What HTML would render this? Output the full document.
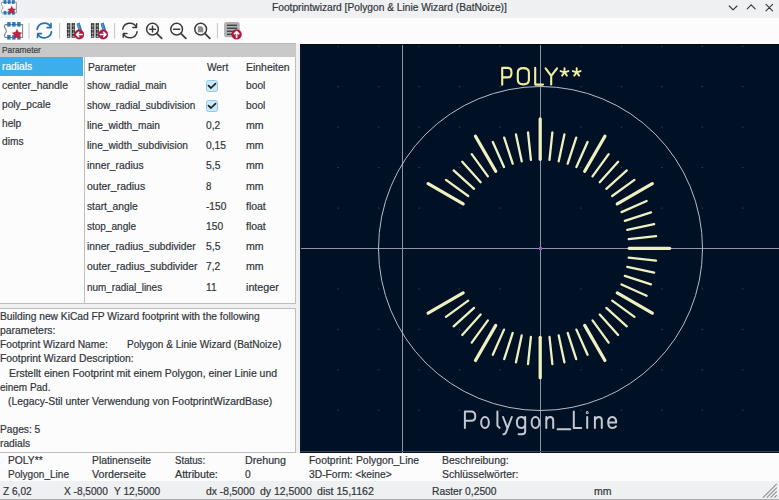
<!DOCTYPE html><html><head><meta charset="utf-8"><style>*{margin:0;padding:0;box-sizing:border-box}
html,body{width:779px;height:500px;overflow:hidden;background:#eff0f1;font-family:"Liberation Sans",sans-serif;font-size:10.2px;color:#31363b}
.a{position:absolute;white-space:pre;line-height:1;-webkit-text-stroke:0.2px currentColor}
svg{position:absolute;overflow:visible}
</style></head><body><div style="position:absolute;left:0px;top:0px;width:779px;height:18px;background:#eff0f1;"></div>
<div class="a" style="left:271.70px;top:2.90px;transform:scaleX(1.0017);transform-origin:0 0">Footprintwizard [Polygon &amp; Linie Wizard (BatNoize)]</div>
<div style="position:absolute;left:0px;top:18px;width:779px;height:26px;background:#fcfcfc;"></div>
<div style="position:absolute;left:0px;top:43px;width:296px;height:1px;background:#b9b9b9;"></div>
<div style="position:absolute;left:0px;top:44px;width:296px;height:13px;background:#c9c9c9;"></div>
<div class="a" style="left:1.90px;top:45.85px;transform:scaleX(0.9688);transform-origin:0 0;color:#3b3f44;font-size:8.6px">Parameter</div>
<div style="position:absolute;left:0px;top:57px;width:84px;height:247px;background:#fcfcfc;"></div>
<div style="position:absolute;left:0px;top:57px;width:83px;height:19px;background:#3daee9;"></div>
<div class="a" style="left:2.00px;top:62.30px;color:#fcfcfc">radials</div>
<div class="a" style="left:2.00px;top:81.05px;transform:scaleX(1.0209);transform-origin:0 0">center_handle</div>
<div class="a" style="left:2.00px;top:99.80px">poly_pcale</div>
<div class="a" style="left:2.00px;top:118.55px">help</div>
<div class="a" style="left:2.00px;top:137.30px">dims</div>
<div style="position:absolute;left:84px;top:57px;width:212px;height:247px;background:#fcfcfc;border-left:1px solid #bdbdbd;border-right:1px solid #bdbdbd;border-bottom:1px solid #bdbdbd"></div>
<div class="a" style="left:87.70px;top:62.70px;transform:scaleX(1.0100);transform-origin:0 0">Parameter</div>
<div class="a" style="left:206.90px;top:62.70px">Wert</div>
<div class="a" style="left:246.40px;top:62.70px;transform:scaleX(1.0251);transform-origin:0 0">Einheiten</div>
<div class="a" style="left:86.90px;top:80.60px;transform:scaleX(0.9694);transform-origin:0 0">show_radial_main</div>
<div style="position:absolute;left:206px;top:79.80px;width:12px;height:12px;border:1px solid #8ccbeb;border-radius:2.5px;background:#cbe8f7"></div>
<svg style="left:206px;top:79.80px" width="12" height="12"><path d="M2.5 5.7 L5 8 L9.5 3.7" fill="none" stroke="#1f2326" stroke-width="1.7" stroke-linecap="round" stroke-linejoin="round"/></svg>
<div class="a" style="left:246.10px;top:80.60px">bool</div>
<div class="a" style="left:86.90px;top:100.80px;transform:scaleX(0.9804);transform-origin:0 0">show_radial_subdivision</div>
<div style="position:absolute;left:206px;top:100.00px;width:12px;height:12px;border:1px solid #8ccbeb;border-radius:2.5px;background:#cbe8f7"></div>
<svg style="left:206px;top:100.00px" width="12" height="12"><path d="M2.5 5.7 L5 8 L9.5 3.7" fill="none" stroke="#1f2326" stroke-width="1.7" stroke-linecap="round" stroke-linejoin="round"/></svg>
<div class="a" style="left:246.10px;top:100.80px">bool</div>
<div class="a" style="left:86.90px;top:121.00px;transform:scaleX(0.9994);transform-origin:0 0">line_width_main</div>
<div class="a" style="left:206.10px;top:121.00px">0,2</div>
<div class="a" style="left:246.10px;top:121.00px;transform:scaleX(1.0357);transform-origin:0 0">mm</div>
<div class="a" style="left:86.90px;top:141.20px;transform:scaleX(0.9961);transform-origin:0 0">line_width_subdivision</div>
<div class="a" style="left:206.10px;top:141.20px;transform:scaleX(0.9975);transform-origin:0 0">0,15</div>
<div class="a" style="left:246.10px;top:141.20px;transform:scaleX(1.0357);transform-origin:0 0">mm</div>
<div class="a" style="left:86.90px;top:161.40px;transform:scaleX(1.0084);transform-origin:0 0">inner_radius</div>
<div class="a" style="left:206.10px;top:161.40px;transform:scaleX(1.0157);transform-origin:0 0">5,5</div>
<div class="a" style="left:246.10px;top:161.40px;transform:scaleX(1.0357);transform-origin:0 0">mm</div>
<div class="a" style="left:86.90px;top:181.60px;transform:scaleX(1.0264);transform-origin:0 0">outer_radius</div>
<div class="a" style="left:206.10px;top:181.60px;transform:scaleX(0.9522);transform-origin:0 0">8</div>
<div class="a" style="left:246.10px;top:181.60px;transform:scaleX(1.0357);transform-origin:0 0">mm</div>
<div class="a" style="left:86.90px;top:201.80px;transform:scaleX(1.0046);transform-origin:0 0">start_angle</div>
<div class="a" style="left:206.10px;top:201.80px;transform:scaleX(0.9946);transform-origin:0 0">-150</div>
<div class="a" style="left:246.10px;top:201.80px;transform:scaleX(1.0271);transform-origin:0 0">float</div>
<div class="a" style="left:86.90px;top:222.00px;transform:scaleX(0.9838);transform-origin:0 0">stop_angle</div>
<div class="a" style="left:206.10px;top:222.00px">150</div>
<div class="a" style="left:246.10px;top:222.00px;transform:scaleX(1.0271);transform-origin:0 0">float</div>
<div class="a" style="left:86.90px;top:242.20px;transform:scaleX(1.0046);transform-origin:0 0">inner_radius_subdivider</div>
<div class="a" style="left:206.10px;top:242.20px;transform:scaleX(1.0157);transform-origin:0 0">5,5</div>
<div class="a" style="left:246.10px;top:242.20px;transform:scaleX(1.0357);transform-origin:0 0">mm</div>
<div class="a" style="left:86.90px;top:262.40px;transform:scaleX(1.0169);transform-origin:0 0">outer_radius_subdivider</div>
<div class="a" style="left:206.10px;top:262.40px">7,2</div>
<div class="a" style="left:246.10px;top:262.40px;transform:scaleX(1.0357);transform-origin:0 0">mm</div>
<div class="a" style="left:86.90px;top:282.60px;transform:scaleX(0.9752);transform-origin:0 0">num_radial_lines</div>
<div class="a" style="left:206.10px;top:282.60px">11</div>
<div class="a" style="left:246.10px;top:282.60px;transform:scaleX(1.0500);transform-origin:0 0">integer</div>
<div style="position:absolute;left:0px;top:303px;width:296px;height:1px;background:#bdbdbd;"></div>
<div style="position:absolute;left:0px;top:304px;width:296px;height:4px;background:#eff0f1;"></div>
<div style="position:absolute;left:0px;top:308px;width:296px;height:145px;background:#fcfcfc;border-top:1px solid #bdbdbd;border-right:1px solid #bdbdbd;border-bottom:1px solid #bdbdbd"></div>
<div class="a" style="left:0.00px;top:312.00px;transform:scaleX(1.0042);transform-origin:0 0">Building new KiCad FP Wizard footprint with the following</div>
<div class="a" style="left:0.00px;top:326.15px;transform:scaleX(1.0199);transform-origin:0 0">parameters:</div>
<div class="a" style="left:0.00px;top:340.30px;transform:scaleX(1.0018);transform-origin:0 0">Footprint Wizard Name:</div>
<div class="a" style="left:0.00px;top:354.45px;transform:scaleX(1.0182);transform-origin:0 0">Footprint Wizard Description:</div>
<div class="a" style="left:8.60px;top:368.60px;transform:scaleX(1.0269);transform-origin:0 0">Erstellt einen Footprint mit einem Polygon, einer Linie und</div>
<div class="a" style="left:0.00px;top:382.75px;transform:scaleX(0.9786);transform-origin:0 0">einem Pad.</div>
<div class="a" style="left:8.10px;top:396.90px;transform:scaleX(1.0164);transform-origin:0 0">(Legacy-Stil unter Verwendung von FootprintWizardBase)</div>
<div class="a" style="left:0.00px;top:425.20px">Pages: 5</div>
<div class="a" style="left:0.00px;top:439.35px">radials</div>
<div class="a" style="left:127.20px;top:340.30px;transform:scaleX(0.9874);transform-origin:0 0">Polygon &amp; Linie Wizard (BatNoize)</div>
<svg style="left:300px;top:44px" width="479" height="409"><rect x="0" y="0" width="479" height="409" fill="#001126"/><rect x="37.75" y="1.75" width="1" height="1" fill="#4a5566"/><rect x="37.75" y="42.20" width="1" height="1" fill="#4a5566"/><rect x="37.75" y="82.65" width="1" height="1" fill="#4a5566"/><rect x="37.75" y="123.10" width="1" height="1" fill="#4a5566"/><rect x="37.75" y="163.55" width="1" height="1" fill="#4a5566"/><rect x="37.75" y="204.00" width="1" height="1" fill="#4a5566"/><rect x="37.75" y="244.45" width="1" height="1" fill="#4a5566"/><rect x="37.75" y="284.90" width="1" height="1" fill="#4a5566"/><rect x="37.75" y="325.35" width="1" height="1" fill="#4a5566"/><rect x="37.75" y="365.80" width="1" height="1" fill="#4a5566"/><rect x="78.20" y="1.75" width="1" height="1" fill="#4a5566"/><rect x="78.20" y="42.20" width="1" height="1" fill="#4a5566"/><rect x="78.20" y="82.65" width="1" height="1" fill="#4a5566"/><rect x="78.20" y="123.10" width="1" height="1" fill="#4a5566"/><rect x="78.20" y="163.55" width="1" height="1" fill="#4a5566"/><rect x="78.20" y="204.00" width="1" height="1" fill="#4a5566"/><rect x="78.20" y="244.45" width="1" height="1" fill="#4a5566"/><rect x="78.20" y="284.90" width="1" height="1" fill="#4a5566"/><rect x="78.20" y="325.35" width="1" height="1" fill="#4a5566"/><rect x="78.20" y="365.80" width="1" height="1" fill="#4a5566"/><rect x="118.65" y="1.75" width="1" height="1" fill="#4a5566"/><rect x="118.65" y="42.20" width="1" height="1" fill="#4a5566"/><rect x="118.65" y="82.65" width="1" height="1" fill="#4a5566"/><rect x="118.65" y="123.10" width="1" height="1" fill="#4a5566"/><rect x="118.65" y="163.55" width="1" height="1" fill="#4a5566"/><rect x="118.65" y="204.00" width="1" height="1" fill="#4a5566"/><rect x="118.65" y="244.45" width="1" height="1" fill="#4a5566"/><rect x="118.65" y="284.90" width="1" height="1" fill="#4a5566"/><rect x="118.65" y="325.35" width="1" height="1" fill="#4a5566"/><rect x="118.65" y="365.80" width="1" height="1" fill="#4a5566"/><rect x="159.10" y="1.75" width="1" height="1" fill="#4a5566"/><rect x="159.10" y="42.20" width="1" height="1" fill="#4a5566"/><rect x="159.10" y="82.65" width="1" height="1" fill="#4a5566"/><rect x="159.10" y="123.10" width="1" height="1" fill="#4a5566"/><rect x="159.10" y="163.55" width="1" height="1" fill="#4a5566"/><rect x="159.10" y="204.00" width="1" height="1" fill="#4a5566"/><rect x="159.10" y="244.45" width="1" height="1" fill="#4a5566"/><rect x="159.10" y="284.90" width="1" height="1" fill="#4a5566"/><rect x="159.10" y="325.35" width="1" height="1" fill="#4a5566"/><rect x="159.10" y="365.80" width="1" height="1" fill="#4a5566"/><rect x="199.55" y="1.75" width="1" height="1" fill="#4a5566"/><rect x="199.55" y="42.20" width="1" height="1" fill="#4a5566"/><rect x="199.55" y="82.65" width="1" height="1" fill="#4a5566"/><rect x="199.55" y="123.10" width="1" height="1" fill="#4a5566"/><rect x="199.55" y="163.55" width="1" height="1" fill="#4a5566"/><rect x="199.55" y="204.00" width="1" height="1" fill="#4a5566"/><rect x="199.55" y="244.45" width="1" height="1" fill="#4a5566"/><rect x="199.55" y="284.90" width="1" height="1" fill="#4a5566"/><rect x="199.55" y="325.35" width="1" height="1" fill="#4a5566"/><rect x="199.55" y="365.80" width="1" height="1" fill="#4a5566"/><rect x="240.00" y="1.75" width="1" height="1" fill="#4a5566"/><rect x="240.00" y="42.20" width="1" height="1" fill="#4a5566"/><rect x="240.00" y="82.65" width="1" height="1" fill="#4a5566"/><rect x="240.00" y="123.10" width="1" height="1" fill="#4a5566"/><rect x="240.00" y="163.55" width="1" height="1" fill="#4a5566"/><rect x="240.00" y="204.00" width="1" height="1" fill="#4a5566"/><rect x="240.00" y="244.45" width="1" height="1" fill="#4a5566"/><rect x="240.00" y="284.90" width="1" height="1" fill="#4a5566"/><rect x="240.00" y="325.35" width="1" height="1" fill="#4a5566"/><rect x="240.00" y="365.80" width="1" height="1" fill="#4a5566"/><rect x="280.45" y="1.75" width="1" height="1" fill="#4a5566"/><rect x="280.45" y="42.20" width="1" height="1" fill="#4a5566"/><rect x="280.45" y="82.65" width="1" height="1" fill="#4a5566"/><rect x="280.45" y="123.10" width="1" height="1" fill="#4a5566"/><rect x="280.45" y="163.55" width="1" height="1" fill="#4a5566"/><rect x="280.45" y="204.00" width="1" height="1" fill="#4a5566"/><rect x="280.45" y="244.45" width="1" height="1" fill="#4a5566"/><rect x="280.45" y="284.90" width="1" height="1" fill="#4a5566"/><rect x="280.45" y="325.35" width="1" height="1" fill="#4a5566"/><rect x="280.45" y="365.80" width="1" height="1" fill="#4a5566"/><rect x="320.90" y="1.75" width="1" height="1" fill="#4a5566"/><rect x="320.90" y="42.20" width="1" height="1" fill="#4a5566"/><rect x="320.90" y="82.65" width="1" height="1" fill="#4a5566"/><rect x="320.90" y="123.10" width="1" height="1" fill="#4a5566"/><rect x="320.90" y="163.55" width="1" height="1" fill="#4a5566"/><rect x="320.90" y="204.00" width="1" height="1" fill="#4a5566"/><rect x="320.90" y="244.45" width="1" height="1" fill="#4a5566"/><rect x="320.90" y="284.90" width="1" height="1" fill="#4a5566"/><rect x="320.90" y="325.35" width="1" height="1" fill="#4a5566"/><rect x="320.90" y="365.80" width="1" height="1" fill="#4a5566"/><rect x="361.35" y="1.75" width="1" height="1" fill="#4a5566"/><rect x="361.35" y="42.20" width="1" height="1" fill="#4a5566"/><rect x="361.35" y="82.65" width="1" height="1" fill="#4a5566"/><rect x="361.35" y="123.10" width="1" height="1" fill="#4a5566"/><rect x="361.35" y="163.55" width="1" height="1" fill="#4a5566"/><rect x="361.35" y="204.00" width="1" height="1" fill="#4a5566"/><rect x="361.35" y="244.45" width="1" height="1" fill="#4a5566"/><rect x="361.35" y="284.90" width="1" height="1" fill="#4a5566"/><rect x="361.35" y="325.35" width="1" height="1" fill="#4a5566"/><rect x="361.35" y="365.80" width="1" height="1" fill="#4a5566"/><rect x="401.80" y="1.75" width="1" height="1" fill="#4a5566"/><rect x="401.80" y="42.20" width="1" height="1" fill="#4a5566"/><rect x="401.80" y="82.65" width="1" height="1" fill="#4a5566"/><rect x="401.80" y="123.10" width="1" height="1" fill="#4a5566"/><rect x="401.80" y="163.55" width="1" height="1" fill="#4a5566"/><rect x="401.80" y="204.00" width="1" height="1" fill="#4a5566"/><rect x="401.80" y="244.45" width="1" height="1" fill="#4a5566"/><rect x="401.80" y="284.90" width="1" height="1" fill="#4a5566"/><rect x="401.80" y="325.35" width="1" height="1" fill="#4a5566"/><rect x="401.80" y="365.80" width="1" height="1" fill="#4a5566"/><rect x="442.25" y="1.75" width="1" height="1" fill="#4a5566"/><rect x="442.25" y="42.20" width="1" height="1" fill="#4a5566"/><rect x="442.25" y="82.65" width="1" height="1" fill="#4a5566"/><rect x="442.25" y="123.10" width="1" height="1" fill="#4a5566"/><rect x="442.25" y="163.55" width="1" height="1" fill="#4a5566"/><rect x="442.25" y="204.00" width="1" height="1" fill="#4a5566"/><rect x="442.25" y="244.45" width="1" height="1" fill="#4a5566"/><rect x="442.25" y="284.90" width="1" height="1" fill="#4a5566"/><rect x="442.25" y="325.35" width="1" height="1" fill="#4a5566"/><rect x="442.25" y="365.80" width="1" height="1" fill="#4a5566"/><line x1="240.50" y1="0" x2="240.50" y2="409" stroke="#8c96a8" stroke-width="1"/><line x1="0" y1="204.50" x2="479" y2="204.50" stroke="#8c96a8" stroke-width="1"/><line x1="102.5" y1="0" x2="102.5" y2="409" stroke="#8c96a8" stroke-width="1"/><circle cx="240.50" cy="204.50" r="162" fill="none" stroke="#b4bcc8" stroke-width="1"/><line x1="163.13" y1="159.85" x2="128.10" y2="139.63" stroke="#eff0c0" stroke-width="3.25" stroke-linecap="round"/><line x1="168.21" y1="152.04" x2="145.95" y2="135.88" stroke="#eff0c0" stroke-width="2.30" stroke-linecap="round"/><line x1="174.07" y1="144.80" x2="153.63" y2="126.40" stroke="#eff0c0" stroke-width="2.30" stroke-linecap="round"/><line x1="180.65" y1="138.22" x2="162.25" y2="117.78" stroke="#eff0c0" stroke-width="2.30" stroke-linecap="round"/><line x1="187.89" y1="132.36" x2="171.73" y2="110.10" stroke="#eff0c0" stroke-width="2.30" stroke-linecap="round"/><line x1="195.71" y1="127.28" x2="175.48" y2="92.25" stroke="#eff0c0" stroke-width="3.25" stroke-linecap="round"/><line x1="204.00" y1="123.05" x2="192.82" y2="97.93" stroke="#eff0c0" stroke-width="2.30" stroke-linecap="round"/><line x1="212.70" y1="119.72" x2="204.20" y2="93.56" stroke="#eff0c0" stroke-width="2.30" stroke-linecap="round"/><line x1="221.70" y1="117.30" x2="215.98" y2="90.40" stroke="#eff0c0" stroke-width="2.30" stroke-linecap="round"/><line x1="230.90" y1="115.85" x2="228.02" y2="88.49" stroke="#eff0c0" stroke-width="2.30" stroke-linecap="round"/><line x1="240.20" y1="115.36" x2="240.20" y2="74.91" stroke="#eff0c0" stroke-width="3.25" stroke-linecap="round"/><line x1="249.50" y1="115.85" x2="252.38" y2="88.49" stroke="#eff0c0" stroke-width="2.30" stroke-linecap="round"/><line x1="258.70" y1="117.30" x2="264.42" y2="90.40" stroke="#eff0c0" stroke-width="2.30" stroke-linecap="round"/><line x1="267.70" y1="119.72" x2="276.20" y2="93.56" stroke="#eff0c0" stroke-width="2.30" stroke-linecap="round"/><line x1="276.40" y1="123.05" x2="287.58" y2="97.93" stroke="#eff0c0" stroke-width="2.30" stroke-linecap="round"/><line x1="284.70" y1="127.28" x2="304.92" y2="92.25" stroke="#eff0c0" stroke-width="3.25" stroke-linecap="round"/><line x1="292.51" y1="132.36" x2="308.67" y2="110.10" stroke="#eff0c0" stroke-width="2.30" stroke-linecap="round"/><line x1="299.75" y1="138.22" x2="318.15" y2="117.78" stroke="#eff0c0" stroke-width="2.30" stroke-linecap="round"/><line x1="306.33" y1="144.80" x2="326.77" y2="126.40" stroke="#eff0c0" stroke-width="2.30" stroke-linecap="round"/><line x1="312.19" y1="152.04" x2="334.45" y2="135.88" stroke="#eff0c0" stroke-width="2.30" stroke-linecap="round"/><line x1="317.27" y1="159.85" x2="352.30" y2="139.63" stroke="#eff0c0" stroke-width="3.25" stroke-linecap="round"/><line x1="321.50" y1="168.15" x2="346.62" y2="156.97" stroke="#eff0c0" stroke-width="2.30" stroke-linecap="round"/><line x1="324.83" y1="176.85" x2="350.99" y2="168.35" stroke="#eff0c0" stroke-width="2.30" stroke-linecap="round"/><line x1="327.25" y1="185.85" x2="354.15" y2="180.13" stroke="#eff0c0" stroke-width="2.30" stroke-linecap="round"/><line x1="328.70" y1="195.05" x2="356.06" y2="192.17" stroke="#eff0c0" stroke-width="2.30" stroke-linecap="round"/><line x1="329.19" y1="204.35" x2="369.64" y2="204.35" stroke="#eff0c0" stroke-width="3.25" stroke-linecap="round"/><line x1="328.70" y1="213.65" x2="356.06" y2="216.53" stroke="#eff0c0" stroke-width="2.30" stroke-linecap="round"/><line x1="327.25" y1="222.85" x2="354.15" y2="228.57" stroke="#eff0c0" stroke-width="2.30" stroke-linecap="round"/><line x1="324.83" y1="231.85" x2="350.99" y2="240.35" stroke="#eff0c0" stroke-width="2.30" stroke-linecap="round"/><line x1="321.50" y1="240.55" x2="346.62" y2="251.73" stroke="#eff0c0" stroke-width="2.30" stroke-linecap="round"/><line x1="317.27" y1="248.84" x2="352.30" y2="269.07" stroke="#eff0c0" stroke-width="3.25" stroke-linecap="round"/><line x1="312.19" y1="256.66" x2="334.45" y2="272.82" stroke="#eff0c0" stroke-width="2.30" stroke-linecap="round"/><line x1="306.33" y1="263.90" x2="326.77" y2="282.30" stroke="#eff0c0" stroke-width="2.30" stroke-linecap="round"/><line x1="299.75" y1="270.48" x2="318.15" y2="290.92" stroke="#eff0c0" stroke-width="2.30" stroke-linecap="round"/><line x1="292.51" y1="276.34" x2="308.67" y2="298.60" stroke="#eff0c0" stroke-width="2.30" stroke-linecap="round"/><line x1="284.70" y1="281.42" x2="304.92" y2="316.45" stroke="#eff0c0" stroke-width="3.25" stroke-linecap="round"/><line x1="276.40" y1="285.65" x2="287.58" y2="310.77" stroke="#eff0c0" stroke-width="2.30" stroke-linecap="round"/><line x1="267.70" y1="288.98" x2="276.20" y2="315.14" stroke="#eff0c0" stroke-width="2.30" stroke-linecap="round"/><line x1="258.70" y1="291.40" x2="264.42" y2="318.30" stroke="#eff0c0" stroke-width="2.30" stroke-linecap="round"/><line x1="249.50" y1="292.85" x2="252.38" y2="320.21" stroke="#eff0c0" stroke-width="2.30" stroke-linecap="round"/><line x1="240.20" y1="293.34" x2="240.20" y2="333.79" stroke="#eff0c0" stroke-width="3.25" stroke-linecap="round"/><line x1="230.90" y1="292.85" x2="228.02" y2="320.21" stroke="#eff0c0" stroke-width="2.30" stroke-linecap="round"/><line x1="221.70" y1="291.40" x2="215.98" y2="318.30" stroke="#eff0c0" stroke-width="2.30" stroke-linecap="round"/><line x1="212.70" y1="288.98" x2="204.20" y2="315.14" stroke="#eff0c0" stroke-width="2.30" stroke-linecap="round"/><line x1="204.00" y1="285.65" x2="192.82" y2="310.77" stroke="#eff0c0" stroke-width="2.30" stroke-linecap="round"/><line x1="195.71" y1="281.42" x2="175.48" y2="316.45" stroke="#eff0c0" stroke-width="3.25" stroke-linecap="round"/><line x1="187.89" y1="276.34" x2="171.73" y2="298.60" stroke="#eff0c0" stroke-width="2.30" stroke-linecap="round"/><line x1="180.65" y1="270.48" x2="162.25" y2="290.92" stroke="#eff0c0" stroke-width="2.30" stroke-linecap="round"/><line x1="174.07" y1="263.90" x2="153.63" y2="282.30" stroke="#eff0c0" stroke-width="2.30" stroke-linecap="round"/><line x1="168.21" y1="256.66" x2="145.95" y2="272.82" stroke="#eff0c0" stroke-width="2.30" stroke-linecap="round"/><line x1="163.13" y1="248.85" x2="128.10" y2="269.07" stroke="#eff0c0" stroke-width="3.25" stroke-linecap="round"/><rect x="239.00" y="203.00" width="3" height="3" fill="#a050c0"/></svg>
<div style="position:absolute;left:300px;top:44px;width:1px;height:409px;background:#0a1424;"></div>
<div style="position:absolute;left:300px;top:44px;width:479px;height:1px;background:#030a16;"></div>
<div style="position:absolute;left:300px;top:451px;width:479px;height:1px;background:#394354;"></div>
<div style="position:absolute;left:0px;top:453px;width:779px;height:28px;background:#fcfcfc;"></div>
<div class="a" style="left:7.70px;top:456.00px;transform:scaleX(1.0089);transform-origin:0 0">POLY**</div>
<div class="a" style="left:7.70px;top:470.00px;transform:scaleX(0.9883);transform-origin:0 0">Polygon_Line</div>
<div class="a" style="left:91.90px;top:456.00px;transform:scaleX(1.0119);transform-origin:0 0">Platinenseite</div>
<div class="a" style="left:91.90px;top:470.00px;transform:scaleX(1.0445);transform-origin:0 0">Vorderseite</div>
<div class="a" style="left:174.60px;top:456.00px;transform:scaleX(0.9500);transform-origin:0 0">Status:</div>
<div class="a" style="left:174.60px;top:470.00px;transform:scaleX(1.0500);transform-origin:0 0">Attribute:</div>
<div class="a" style="left:245.00px;top:456.00px;transform:scaleX(1.0479);transform-origin:0 0">Drehung</div>
<div class="a" style="left:245.00px;top:470.00px">0</div>
<div class="a" style="left:308.60px;top:456.00px;transform:scaleX(1.0228);transform-origin:0 0">Footprint: Polygon_Line</div>
<div class="a" style="left:308.60px;top:470.00px;transform:scaleX(1.0085);transform-origin:0 0">3D-Form: &lt;keine&gt;</div>
<div class="a" style="left:441.90px;top:456.00px;transform:scaleX(1.0229);transform-origin:0 0">Beschreibung:</div>
<div class="a" style="left:441.90px;top:470.00px;transform:scaleX(1.0224);transform-origin:0 0">Schlüsselwörter:</div>
<div style="position:absolute;left:0px;top:481px;width:779px;height:19px;background:#eff0f1;"></div>
<div class="a" style="left:2.60px;top:486.90px;transform:scaleX(0.9925);transform-origin:0 0">Z 6,02</div>
<div class="a" style="left:64.40px;top:486.90px;transform:scaleX(0.9926);transform-origin:0 0">X -8,5000</div>
<div class="a" style="left:114.20px;top:486.90px;transform:scaleX(0.9994);transform-origin:0 0">Y 12,5000</div>
<div class="a" style="left:206.20px;top:486.90px;transform:scaleX(1.0144);transform-origin:0 0">dx -8,5000</div>
<div class="a" style="left:259.90px;top:486.90px;transform:scaleX(1.0262);transform-origin:0 0">dy 12,5000</div>
<div class="a" style="left:316.90px;top:486.90px;transform:scaleX(1.0378);transform-origin:0 0">dist 15,1162</div>
<div class="a" style="left:432.40px;top:486.90px;transform:scaleX(1.0082);transform-origin:0 0">Raster 0,2500</div>
<div class="a" style="left:594.40px;top:486.90px;transform:scaleX(1.0298);transform-origin:0 0">mm</div>
<svg style="left:0;top:0" width="779" height="500"><g fill="none" stroke="#f2eda1" stroke-width="2.1" stroke-linecap="round" stroke-linejoin="round"><path d="M502.2,84.7 V67.9 H507.8 C510.4,67.9 511.5,69.6 511.5,72.65 C511.5,75.7 510.4,77.4 507.8,77.4 H502.2"/><path d="M517.8,72.6 C517.8,69.4 519.6,68.1 523.35,68.1 C527.1,68.1 528.9,69.4 528.9,72.6 V79.8 C528.9,83 527.1,84.4 523.35,84.4 C519.6,84.4 517.8,83 517.8,79.8 Z"/><path d="M535.2,67.9 V84.6 H543"/><path d="M545.6,68.3 L551.2,75.9 L557,68.3 M551.2,75.9 V84.4"/><path d="M564.50,72.30 L564.50,68.20 M564.50,72.30 L568.40,71.03 M564.50,72.30 L566.91,75.62 M564.50,72.30 L562.09,75.62 M564.50,72.30 L560.60,71.03 " stroke-width="1.9"/><path d="M576.70,72.30 L576.70,68.20 M576.70,72.30 L580.60,71.03 M576.70,72.30 L579.11,75.62 M576.70,72.30 L574.29,75.62 M576.70,72.30 L572.80,71.03 " stroke-width="1.9"/></g><g fill="none" stroke="#c3c8d0" stroke-width="2" stroke-linecap="round" stroke-linejoin="round"><path d="M464.9,428 V411.6 H471 C474,411.6 475.3,413.2 475.3,416.2 C475.3,419.2 474,420.8 471,420.8 H464.9"/><ellipse cx="485" cy="422.45" rx="3.85" ry="5.45"/><path d="M497.4,411.6 V425.6 L499.6,427.9"/><path d="M503.1,417 L507.4,428.2 M511.8,417 L506,432.3 C505.4,433.8 504.6,434.3 503.4,434.3"/><path d="M525.2,417 V431.2 C525.2,433.2 524,434.2 522,434.2 H518.6 M525.2,420.3 C524.6,418 523.3,417 521.3,417 C518,417 516.9,419.2 516.9,422.5 C516.9,425.8 518,428 521.3,428 C523.3,428 524.6,427 525.2,424.7"/><ellipse cx="535.5" cy="422.45" rx="3.9" ry="5.45"/><path d="M546.3,417 V428 M546.3,420.2 C547.2,417.9 548.4,417 550.2,417 C552.2,417 553.2,418.2 553.2,420.5 V428"/><path d="M557.6,429.2 H570.3"/><path d="M573.8,411.6 V428 H581.2"/><path d="M587.2,417 V428"/><circle cx="587.2" cy="412.4" r="0.5"/><path d="M594.9,417 V428 M594.9,420.2 C595.8,417.9 597,417 598.8,417 C600.8,417 601.8,418.2 601.8,420.5 V428"/><path d="M608.2,422.6 H616.2 C616.2,418.8 614.8,417 612.2,417 C609.4,417 608.2,419 608.2,422.5 C608.2,426 609.4,428 612.2,428 C614,428 615.2,427.4 615.9,426.4"/></g><g transform="translate(0,0)"><path d="M5.2,24.6 H22.6 V37.4 H5.2 C4.1,36.2 4.2,34.8 5.4,33.3 C6.7,31.6 6.6,30 5.3,28.5 C4.2,27.2 4.2,25.6 5.2,24.6 Z" fill="#fcfcfc" stroke="#858789" stroke-width="1.05"/><rect x="7.2" y="22.0" width="3.4" height="4.6" fill="#2b7cbd"/><rect x="7.2" y="24.0" width="3.4" height="0.6" fill="#2369a3"/><rect x="7.2" y="35.0" width="3.4" height="4.6" fill="#2b7cbd"/><rect x="7.2" y="37.0" width="3.4" height="0.6" fill="#2369a3"/><rect x="12.2" y="22.0" width="3.4" height="4.6" fill="#2b7cbd"/><rect x="12.2" y="24.0" width="3.4" height="0.6" fill="#2369a3"/><rect x="12.2" y="35.0" width="3.4" height="4.6" fill="#2b7cbd"/><rect x="12.2" y="37.0" width="3.4" height="0.6" fill="#2369a3"/><rect x="17.2" y="22.0" width="3.4" height="4.6" fill="#2b7cbd"/><rect x="17.2" y="24.0" width="3.4" height="0.6" fill="#2369a3"/><rect x="17.2" y="35.0" width="3.4" height="4.6" fill="#2b7cbd"/><rect x="17.2" y="37.0" width="3.4" height="0.6" fill="#2369a3"/><polygon points="17.00,28.90 18.68,32.09 22.23,32.70 19.71,35.28 20.23,38.85 17.00,37.25 13.77,38.85 14.29,35.28 11.77,32.70 15.32,32.09" fill="#c02243"/></g><g transform="translate(-2.38,-18.16) scale(0.83)"><path d="M5.2,24.6 H22.6 V37.4 H5.2 C4.1,36.2 4.2,34.8 5.4,33.3 C6.7,31.6 6.6,30 5.3,28.5 C4.2,27.2 4.2,25.6 5.2,24.6 Z" fill="#fcfcfc" stroke="#858789" stroke-width="1.05"/><rect x="7.2" y="22.0" width="3.4" height="4.6" fill="#2b7cbd"/><rect x="7.2" y="24.0" width="3.4" height="0.6" fill="#2369a3"/><rect x="7.2" y="35.0" width="3.4" height="4.6" fill="#2b7cbd"/><rect x="7.2" y="37.0" width="3.4" height="0.6" fill="#2369a3"/><rect x="12.2" y="22.0" width="3.4" height="4.6" fill="#2b7cbd"/><rect x="12.2" y="24.0" width="3.4" height="0.6" fill="#2369a3"/><rect x="12.2" y="35.0" width="3.4" height="4.6" fill="#2b7cbd"/><rect x="12.2" y="37.0" width="3.4" height="0.6" fill="#2369a3"/><rect x="17.2" y="22.0" width="3.4" height="4.6" fill="#2b7cbd"/><rect x="17.2" y="24.0" width="3.4" height="0.6" fill="#2369a3"/><rect x="17.2" y="35.0" width="3.4" height="4.6" fill="#2b7cbd"/><rect x="17.2" y="37.0" width="3.4" height="0.6" fill="#2369a3"/><polygon points="17.00,28.90 18.68,32.09 22.23,32.70 19.71,35.28 20.23,38.85 17.00,37.25 13.77,38.85 14.29,35.28 11.77,32.70 15.32,32.09" fill="#c02243"/></g><rect x="28.5" y="23" width="1" height="15.5" fill="#c4c5c6"/><rect x="59.1" y="23" width="1" height="15.5" fill="#c4c5c6"/><rect x="114.1" y="23" width="1" height="15.5" fill="#c4c5c6"/><rect x="216.9" y="23" width="1" height="15.5" fill="#c4c5c6"/><g fill="none" stroke="#2b72ad" stroke-width="1.75" stroke-linecap="round" stroke-linejoin="round"><path d="M37.11,29.28 A7.3,7.3 0 0 1 50.62,26.90"/><path d="M51.49,31.82 A7.3,7.3 0 0 1 37.98,34.20"/><path d="M47.22,27.50 L50.92,27.50 L51.02,23.70"/><path d="M41.38,33.60 L37.68,33.60 L37.58,37.40"/></g><g fill="none" stroke="#3a3c3e" stroke-width="1.5" stroke-linecap="round" stroke-linejoin="round"><path d="M122.71,29.23 A7.3,7.3 0 0 1 136.22,26.85"/><path d="M137.09,31.77 A7.3,7.3 0 0 1 123.58,34.15"/><path d="M132.82,27.45 L136.52,27.45 L136.62,23.65"/><path d="M126.98,33.55 L123.28,33.55 L123.18,37.35"/></g><g transform="translate(0,0)"><rect x="70" y="23.1" width="1.9" height="14.7" fill="#b4b5b6"/><rect x="66.9" y="23.1" width="3" height="14.7" fill="#2e3032"/><rect x="68.0" y="23.1" width="0.8" height="14.7" fill="#6d6f71"/><rect x="67.30000000000001" y="25.6" width="2.2" height="0.7" fill="#d8d8d8"/><rect x="67.30000000000001" y="29.2" width="2.2" height="0.7" fill="#d8d8d8"/><rect x="67.30000000000001" y="32.8" width="2.2" height="0.7" fill="#d8d8d8"/><rect x="67.30000000000001" y="36.0" width="2.2" height="0.7" fill="#d8d8d8"/><rect x="71.9" y="23.1" width="3" height="14.7" fill="#2e3032"/><rect x="73.0" y="23.1" width="0.8" height="14.7" fill="#6d6f71"/><rect x="72.30000000000001" y="25.6" width="2.2" height="0.7" fill="#d8d8d8"/><rect x="72.30000000000001" y="29.2" width="2.2" height="0.7" fill="#d8d8d8"/><rect x="72.30000000000001" y="32.8" width="2.2" height="0.7" fill="#d8d8d8"/><rect x="72.30000000000001" y="36.0" width="2.2" height="0.7" fill="#d8d8d8"/><polygon points="76.5,23.4 79.6,22.5 82.2,30.6 78.7,31.4" fill="#3178b8"/><polygon points="77.4,23.2 78.3,22.9 80.4,30.9 79.5,31.1" fill="#6aa6d8"/><circle cx="79.2" cy="34.5" r="4.9" fill="#b3193d"/><path d="M82.1,34.5 H76.6 M78.7,32.3 L76.5,34.5 L78.7,36.7" fill="none" stroke="#fff" stroke-width="1.6" stroke-linecap="round" stroke-linejoin="round"/></g><g transform="translate(24,0)"><rect x="70" y="23.1" width="1.9" height="14.7" fill="#b4b5b6"/><rect x="66.9" y="23.1" width="3" height="14.7" fill="#2e3032"/><rect x="68.0" y="23.1" width="0.8" height="14.7" fill="#6d6f71"/><rect x="67.30000000000001" y="25.6" width="2.2" height="0.7" fill="#d8d8d8"/><rect x="67.30000000000001" y="29.2" width="2.2" height="0.7" fill="#d8d8d8"/><rect x="67.30000000000001" y="32.8" width="2.2" height="0.7" fill="#d8d8d8"/><rect x="67.30000000000001" y="36.0" width="2.2" height="0.7" fill="#d8d8d8"/><rect x="71.9" y="23.1" width="3" height="14.7" fill="#2e3032"/><rect x="73.0" y="23.1" width="0.8" height="14.7" fill="#6d6f71"/><rect x="72.30000000000001" y="25.6" width="2.2" height="0.7" fill="#d8d8d8"/><rect x="72.30000000000001" y="29.2" width="2.2" height="0.7" fill="#d8d8d8"/><rect x="72.30000000000001" y="32.8" width="2.2" height="0.7" fill="#d8d8d8"/><rect x="72.30000000000001" y="36.0" width="2.2" height="0.7" fill="#d8d8d8"/><polygon points="76.5,23.4 79.6,22.5 82.2,30.6 78.7,31.4" fill="#3178b8"/><polygon points="77.4,23.2 78.3,22.9 80.4,30.9 79.5,31.1" fill="#6aa6d8"/><circle cx="79.2" cy="34.5" r="4.9" fill="#b3193d"/><path d="M76.3,34.5 H81.8 M79.7,32.3 L81.9,34.5 L79.7,36.7" fill="none" stroke="#fff" stroke-width="1.6" stroke-linecap="round" stroke-linejoin="round"/></g><g fill="none" stroke="#3a3c3e" stroke-width="1.5" stroke-linecap="round"><circle cx="152.5" cy="29.15" r="5.85"/><path d="M156.65,33.28 L161.7,38.3" stroke-width="1.8"/><path d="M149.6,29.15 H155.4 M152.5,26.25 V32.05" stroke-width="1.5"/></g><g fill="none" stroke="#3a3c3e" stroke-width="1.5" stroke-linecap="round"><circle cx="176.65" cy="29.2" r="5.85"/><path d="M180.80,33.33 L185.8,38.3" stroke-width="1.8"/><path d="M173.6,29.2 H179.7" stroke-width="1.6"/></g><g fill="none" stroke="#3a3c3e" stroke-width="1.5" stroke-linecap="round"><circle cx="200.7" cy="29.2" r="5.85"/><path d="M204.84,33.34 L209.8,38.3" stroke-width="1.8"/><path d="M197.9,26.2 H201.6 L203.3,27.9 V32.2 H197.9 Z" fill="#8a8c8e" stroke="none"/></g><g><rect x="224.1" y="22.1" width="15.6" height="15.2" rx="2.2" fill="#aeb0b2"/><rect x="227" y="24.6" width="10" height="1.4" fill="#45474a"/><rect x="227" y="27.6" width="10" height="1.4" fill="#45474a"/><rect x="227" y="30.6" width="10" height="1.4" fill="#45474a"/><rect x="227" y="33.6" width="10" height="1.4" fill="#45474a"/><circle cx="236.6" cy="34.4" r="5.2" fill="#b3193d"/><path d="M236.6,37.4 V31.6 M234.4,33.8 L236.6,31.6 L238.8,33.8" fill="none" stroke="#fff" stroke-width="1.6" stroke-linecap="round" stroke-linejoin="round"/></g><g fill="none" stroke="#31363b" stroke-width="1.1" stroke-linecap="round" stroke-linejoin="round"><path d="M729.2,6 L733.1,9.9 L737,6"/><path d="M747.2,8.8 L751.2,4.9 L755.2,8.8"/><path d="M766,4.3 L772.6,10.9 M772.6,4.3 L766,10.9"/></g><g stroke="#8f9193" stroke-width="1.15" stroke-linecap="butt"><path d="M763,497.6 L776.8,483.8 M766.8,497.6 L776.8,487.6 M770.6,497.6 L776.8,491.4 M774.4,497.6 L776.8,495.2"/></g><rect x="0" y="499" width="779" height="1" fill="#a9aaab"/></svg></body></html>
